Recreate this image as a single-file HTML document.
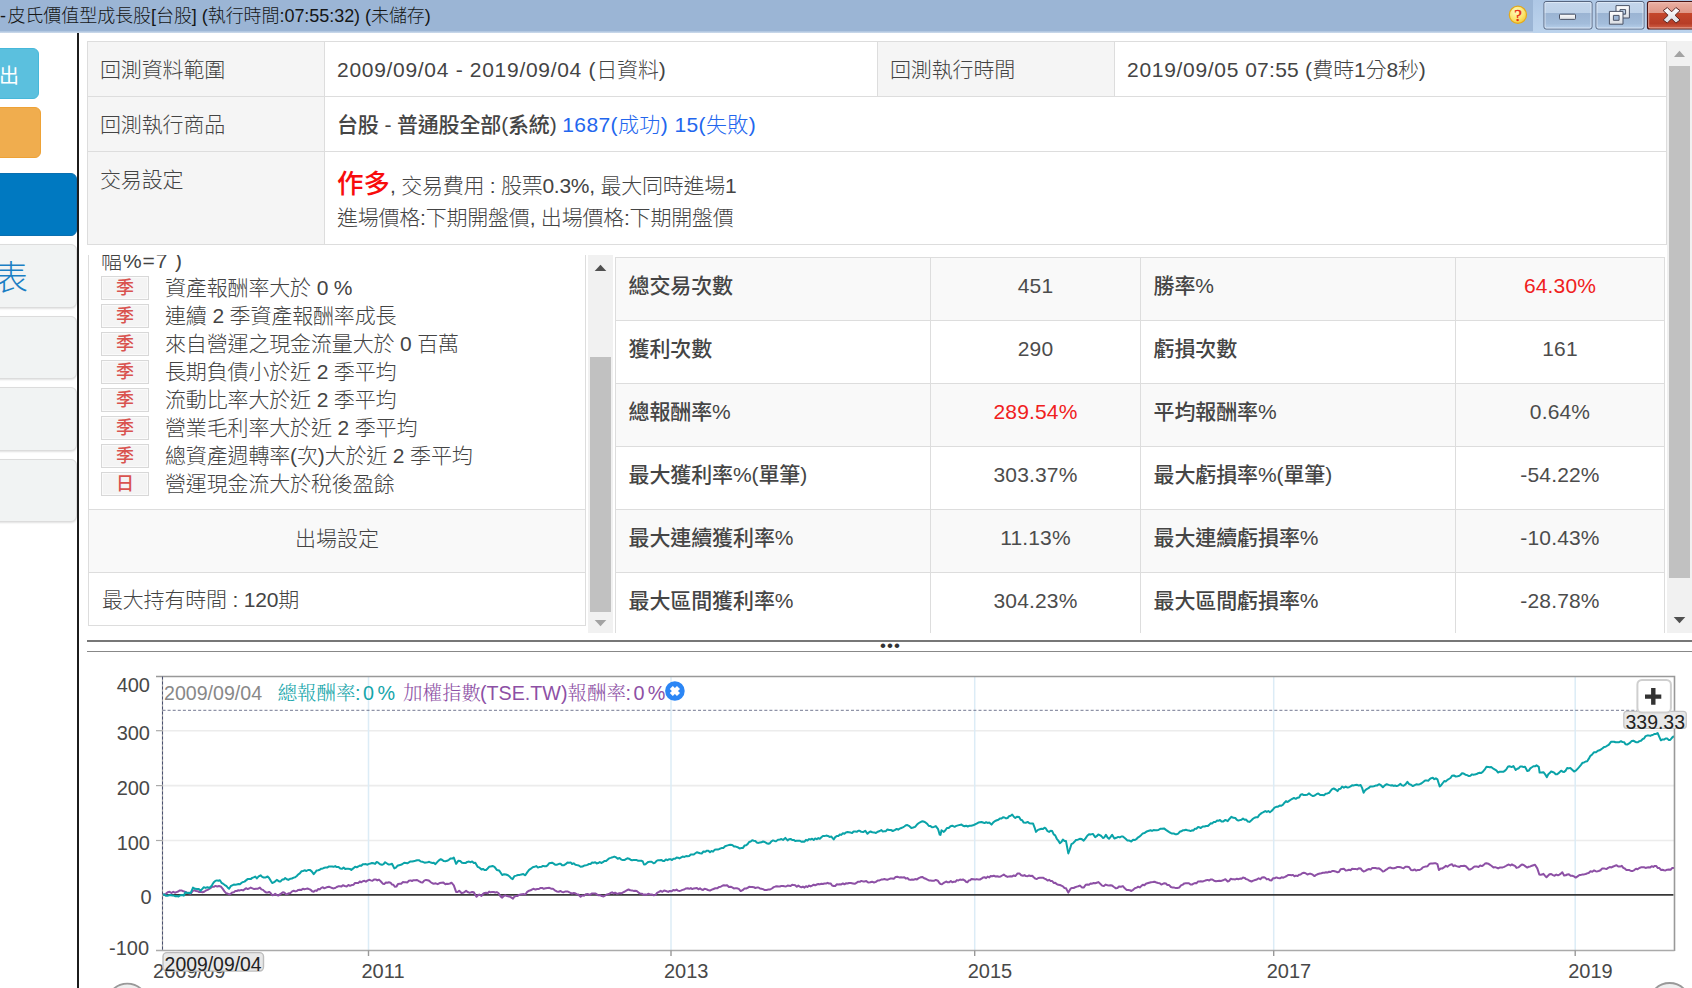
<!DOCTYPE html>
<html lang="zh-Hant">
<head>
<meta charset="utf-8">
<title>回測報告</title>
<style>
html,body{margin:0;padding:0;overflow:hidden;}
body{width:1692px;height:988px;overflow:hidden;position:relative;background:#fff;
  font-family:"Liberation Sans","Noto Sans CJK TC",sans-serif;color:#333;}
.abs{position:absolute;}
/* title bar */
#titlebar{left:0;top:0;width:1692px;height:32px;background:#9bb5d5;}
#title{left:0;top:0;height:32px;line-height:32px;font-size:18px;color:#151515;white-space:nowrap;font-weight:300;letter-spacing:-.05px;}
/* sidebar */
#vline{left:77px;top:33px;width:2px;height:955px;background:#1c1c1c;}
.sbtn{left:-10px;border-radius:6px;box-sizing:border-box;}
.stab{left:-10px;width:87px;box-sizing:border-box;background:#f1f3f3;border:1px solid #dcdcdc;border-radius:6px;box-shadow:0 1px 2px rgba(0,0,0,.12);}
/* info table */
.cell{box-sizing:border-box;border:1px solid #ddd;font-size:21px;font-weight:300;color:#444;white-space:nowrap;letter-spacing:-.15px;}
.lab{background:#f5f5f5;}
.n{letter-spacing:.7px;}
/* stats */
.srow{left:615px;width:1050px;height:63px;box-sizing:border-box;border-top:1px solid #ddd;}
.srow.odd{background:#f9f9f9;}
.sc{position:absolute;top:0;height:62px;line-height:55px;font-size:21px;letter-spacing:-.1px;box-sizing:border-box;border-left:1px solid #ddd;white-space:nowrap;color:#333;}
.sl{color:#454545;font-weight:500;padding-left:12.5px;text-align:left;}
.sv{font-weight:300;text-align:center;letter-spacing:.15px;color:#4c4c4c;}
.red{color:#f02020;}
/* list */
.li{left:101px;height:24px;white-space:nowrap;}
.tag{position:absolute;left:0;top:-.5px;width:48px;height:24px;box-sizing:border-box;border:1px solid #d8d8d8;background:#f4f4f4;
  box-shadow:inset 0 0 0 1px #fafafa;color:#d9534f;font-size:18px;line-height:22px;text-align:center;font-weight:500;}
.lt{position:absolute;left:64px;top:0;font-size:21px;line-height:24px;font-weight:300;color:#444;letter-spacing:-.15px;word-spacing:0px;}
</style>
</head>
<body>
<!-- TITLE BAR -->
<div id="titlebar" class="abs"></div>
<div id="title" class="abs"><span style="letter-spacing:1.4px">-</span>皮氏價值型成長股[台股] (執行時間:07:55:32) (未儲存)</div>


<div class="abs" style="left:0;top:31px;width:1692px;height:2px;background:linear-gradient(#a9c1de,#cfdcec);"></div>
<div class="abs" style="left:1533px;top:0;width:159px;height:33px;background:linear-gradient(#aec7e5,#bdd4ed);"></div>
<svg class="abs" style="left:1500px;top:0;" width="192" height="34" viewBox="1500 0 192 34">
<defs>
<linearGradient id="gb" x1="0" y1="0" x2="0" y2="1"><stop offset="0" stop-color="#c4d6eb"/><stop offset=".42" stop-color="#bdd1e8"/><stop offset=".43" stop-color="#9bb4d3"/><stop offset=".8" stop-color="#a2bcda"/><stop offset="1" stop-color="#b9d1ec"/></linearGradient>
<linearGradient id="gr" x1="0" y1="0" x2="0" y2="1"><stop offset="0" stop-color="#eab0a3"/><stop offset=".42" stop-color="#df9686"/><stop offset=".43" stop-color="#c4462b"/><stop offset=".8" stop-color="#b73d27"/><stop offset="1" stop-color="#d4654a"/></linearGradient>
<radialGradient id="gy" cx=".4" cy=".3" r=".8"><stop offset="0" stop-color="#fffbc0"/><stop offset=".6" stop-color="#fbe36a"/><stop offset="1" stop-color="#f3bf2a"/></radialGradient>
<linearGradient id="gw" x1="0" y1="0" x2="0" y2="1"><stop offset="0" stop-color="#ffffff"/><stop offset="1" stop-color="#d9dde3"/></linearGradient>
</defs>
<circle cx="1517.9" cy="14.8" r="8.6" fill="url(#gy)" stroke="#e3a81c" stroke-width="1.2"/>
<text x="1517.9" y="20.6" text-anchor="middle" font-family="'Liberation Serif',serif" font-weight="normal" font-size="17" fill="#e62a12" stroke="#e62a12" stroke-width=".35">?</text>
<rect x="1544" y="1.5" width="48" height="27.5" rx="2" fill="url(#gb)" stroke="#56657f" stroke-width="1"/>
<rect x="1545" y="2.5" width="46" height="25.5" rx="1.4" fill="none" stroke="#e4eefa" stroke-opacity=".75" stroke-width="1"/>
<rect x="1596" y="1.5" width="48" height="27.5" rx="2" fill="url(#gb)" stroke="#56657f" stroke-width="1"/>
<rect x="1597" y="2.5" width="46" height="25.5" rx="1.4" fill="none" stroke="#e4eefa" stroke-opacity=".75" stroke-width="1"/>
<rect x="1647.5" y="1.5" width="50" height="27.5" rx="2" fill="url(#gr)" stroke="#4a1313" stroke-width="1.2"/>
<rect x="1648.7" y="2.7" width="48" height="25.2" rx="1.4" fill="none" stroke="#f3c8bf" stroke-opacity=".7" stroke-width="1"/>
<!-- minimise glyph -->
<rect x="1559.5" y="14.2" width="16" height="5.2" rx=".8" fill="url(#gw)" stroke="#4b5366" stroke-width="1"/>
<!-- restore glyph -->
<path fill-rule="evenodd" d="M1616 5.6 h13.4 v12.4 h-13.4 z M1620 9.6 v4.6 h5.6 v-4.6 z" fill="url(#gw)" stroke="#4b5366" stroke-width="1"/>
<rect x="1609.4" y="11.4" width="13.6" height="12.8" fill="#9db6d5"/>
<path fill-rule="evenodd" d="M1609.4 11.4 h13.6 v12.8 h-13.6 z M1613.4 15.4 v4.9 h5.7 v-4.9 z" fill="url(#gw)" stroke="#4b5366" stroke-width="1"/>
<!-- close glyph -->
<path d="M1663.2 10.6 l4.1 -3.1 l4.3 4.3 l4.3 -4.3 l4.1 3.1 l-4.9 4.7 l4.9 4.7 l-4.1 3.1 l-4.3 -4.3 l-4.3 4.3 l-4.1 -3.1 l4.9 -4.7 z" fill="url(#gw)" stroke="#5b2320" stroke-width="1" stroke-linejoin="round"/>
</svg>

<!-- SIDEBAR -->

<div class="abs sbtn" style="top:48px;width:49px;height:51px;background:#5bc0de;border:1px solid #46b8da;"></div>
<div class="abs" style="left:-1px;top:64px;font-size:20px;line-height:24px;color:#fff;font-weight:400;">出</div>
<div class="abs sbtn" style="top:107px;width:51px;height:51px;background:#f0ad4e;border:1px solid #eea236;"></div>
<div class="abs sbtn" style="top:173px;width:87px;height:63px;background:#0079c1;border:1px solid #0a6fb0;border-radius:6px;"></div>
<div class="abs stab" style="top:244px;height:64px;"></div>
<div class="abs" style="left:-6px;top:256px;font-size:34px;line-height:44px;color:#1b7fc4;font-weight:300;">表</div>
<div class="abs stab" style="top:316px;height:63px;"></div>
<div class="abs stab" style="top:387px;height:64px;"></div>
<div class="abs stab" style="top:459px;height:63px;"></div>
<div id="vline" class="abs"></div>

<!-- INFO TABLE -->
<div class="abs cell lab" style="left:87px;top:41px;width:238px;height:56px;"><span class="abs" style="left:12px;top:14px;line-height:28px;">回測資料範圍</span></div>
<div class="abs cell" style="left:324px;top:41px;width:554px;height:56px;"><span class="abs" style="left:12px;top:14px;line-height:28px;"><span class="n">2009/09/04 - 2019/09/04 (</span>日資料)</span></div>
<div class="abs cell lab" style="left:877px;top:41px;width:238px;height:56px;"><span class="abs" style="left:12px;top:14px;line-height:28px;">回測執行時間</span></div>
<div class="abs cell" style="left:1114px;top:41px;width:553px;height:56px;"><span class="abs" style="left:12px;top:14px;line-height:28px;"><span class="n">2019/09/05</span><span style="letter-spacing:.25px"> 07:55 (</span>費時1分8秒)</span></div>
<div class="abs cell lab" style="left:87px;top:96px;width:238px;height:56px;"><span class="abs" style="left:12px;top:14px;line-height:28px;">回測執行商品</span></div>
<div class="abs cell" style="left:324px;top:96px;width:1343px;height:56px;"><span class="abs" style="left:12px;top:14px;line-height:28px;"><b style="font-weight:500;color:#454545;">台股 - 普通股全部(系統)</b> <span style="color:#2266ee;letter-spacing:.4px;">1687(成功) 15(失敗)</span></span></div>
<div class="abs cell lab" style="left:87px;top:151px;width:238px;height:94px;"><span class="abs" style="left:12px;top:14px;line-height:28px;">交易設定</span></div>
<div class="abs cell" style="left:324px;top:151px;width:1343px;height:94px;"><span class="abs" style="left:12px;top:14px;line-height:36px;"><b style="color:#f80c0c;font-size:26.5px;font-weight:500;letter-spacing:0;">作多</b><span style="letter-spacing:-.25px">, 交易費用 : 股票0.3%, 最大同時進場1</span></span><span class="abs" style="left:12px;top:52px;line-height:28px;letter-spacing:-.22px;">進場價格:下期開盤價, 出場價格:下期開盤價</span></div>


<!-- LIST PANEL -->
<div class="abs" id="listclip" style="left:87px;top:255px;width:500px;height:379px;overflow:hidden;">
<div class="abs" style="left:1px;top:-60px;width:498px;height:431px;box-sizing:border-box;border:1px solid #ddd;"></div>
<div class="abs lt" style="left:14px;top:-6px;letter-spacing:.9px;">幅%=7 )</div>
<div class="abs li" style="left:14px;top:21px;"><span class="tag">季</span><span class="lt">資產報酬率大於 0 %</span></div>
<div class="abs li" style="left:14px;top:49px;"><span class="tag">季</span><span class="lt">連續 2 季資產報酬率成長</span></div>
<div class="abs li" style="left:14px;top:77px;"><span class="tag">季</span><span class="lt">來自營運之現金流量大於 0 百萬</span></div>
<div class="abs li" style="left:14px;top:105px;"><span class="tag">季</span><span class="lt">長期負債小於近 2 季平均</span></div>
<div class="abs li" style="left:14px;top:133px;"><span class="tag">季</span><span class="lt">流動比率大於近 2 季平均</span></div>
<div class="abs li" style="left:14px;top:161px;"><span class="tag">季</span><span class="lt">營業毛利率大於近 2 季平均</span></div>
<div class="abs li" style="left:14px;top:189px;"><span class="tag">季</span><span class="lt">總資產週轉率(次)大於近 2 季平均</span></div>
<div class="abs li" style="left:14px;top:217px;"><span class="tag">日</span><span class="lt">營運現金流大於稅後盈餘</span></div>
<div class="abs" style="left:1px;top:254px;width:498px;height:64px;box-sizing:border-box;border:1px solid #ddd;background:#f9f9f9;text-align:center;font-size:21px;font-weight:300;line-height:58px;color:#444;">出場設定</div>
<div class="abs" style="left:15px;top:331px;font-size:21px;font-weight:300;line-height:28px;color:#444;white-space:nowrap;letter-spacing:-.2px;">最大持有時間 : 120期</div>
</div>
<!-- list scrollbar -->
<div class="abs" style="left:588px;top:255px;width:25px;height:378px;background:#f1f1f1;"></div>
<div class="abs" style="left:590px;top:357px;width:21px;height:255px;background:#c1c1c1;"></div>
<svg class="abs" style="left:588px;top:255px;" width="25" height="378"><path d="M6.7 16 L12.5 9.7 L18.3 16 Z" fill="#505050"/><path d="M6.7 365 L12.5 371.3 L18.3 365 Z" fill="#a3a3a3"/></svg>

<!-- STATS TABLE -->
<div class="abs" id="statclip" style="left:0;top:257px;width:1667px;height:376px;overflow:hidden;">
<div class="abs srow odd" style="top:0px;"><div class="sc sl" style="left:0;width:315px;">總交易次數</div><div class="sc sv " style="left:315px;width:210px;">451</div><div class="sc sl" style="left:525px;width:315px;">勝率%</div><div class="sc sv red" style="left:840px;width:210px;border-right:1px solid #ddd;">64.30%</div></div>
<div class="abs srow " style="top:63px;"><div class="sc sl" style="left:0;width:315px;">獲利次數</div><div class="sc sv " style="left:315px;width:210px;">290</div><div class="sc sl" style="left:525px;width:315px;">虧損次數</div><div class="sc sv " style="left:840px;width:210px;border-right:1px solid #ddd;">161</div></div>
<div class="abs srow odd" style="top:126px;"><div class="sc sl" style="left:0;width:315px;">總報酬率%</div><div class="sc sv red" style="left:315px;width:210px;">289.54%</div><div class="sc sl" style="left:525px;width:315px;">平均報酬率%</div><div class="sc sv " style="left:840px;width:210px;border-right:1px solid #ddd;">0.64%</div></div>
<div class="abs srow " style="top:189px;"><div class="sc sl" style="left:0;width:315px;">最大獲利率%(單筆)</div><div class="sc sv " style="left:315px;width:210px;">303.37%</div><div class="sc sl" style="left:525px;width:315px;">最大虧損率%(單筆)</div><div class="sc sv " style="left:840px;width:210px;border-right:1px solid #ddd;">-54.22%</div></div>
<div class="abs srow odd" style="top:252px;"><div class="sc sl" style="left:0;width:315px;">最大連續獲利率%</div><div class="sc sv " style="left:315px;width:210px;">11.13%</div><div class="sc sl" style="left:525px;width:315px;">最大連續虧損率%</div><div class="sc sv " style="left:840px;width:210px;border-right:1px solid #ddd;">-10.43%</div></div>
<div class="abs srow " style="top:315px;"><div class="sc sl" style="left:0;width:315px;">最大區間獲利率%</div><div class="sc sv " style="left:315px;width:210px;">304.23%</div><div class="sc sl" style="left:525px;width:315px;">最大區間虧損率%</div><div class="sc sv " style="left:840px;width:210px;border-right:1px solid #ddd;">-28.78%</div></div>
</div>
<!-- main scrollbar -->
<div class="abs" style="left:1667px;top:41px;width:25px;height:592px;background:#f1f1f1;"></div>
<div class="abs" style="left:1669px;top:66px;width:21px;height:512px;background:#c1c1c1;"></div>
<svg class="abs" style="left:1667px;top:41px;" width="25" height="592"><path d="M7 16 L12.5 9.7 L18 16 Z" fill="#a3a3a3"/><path d="M6.7 576 L12.5 582.3 L18.3 576 Z" fill="#505050"/></svg>


<!-- SPLITTER -->
<div class="abs" style="left:87px;top:640px;width:1605px;height:2px;background:#777;"></div>
<div class="abs" style="left:87px;top:651px;width:1605px;height:1px;background:#888;"></div>
<div class="abs" style="left:879.9px;top:636.4px;font-size:17px;line-height:20px;letter-spacing:1.07px;color:#333;font-family:'Liberation Sans',sans-serif;">•••</div>


<!-- CHART -->
<svg class="abs" id="chart" style="left:0;top:655px;" width="1692" height="333" viewBox="0 655 1692 333" font-family="'Liberation Sans',sans-serif">
<line x1="162.5" x2="1674.5" y1="730.7" y2="730.7" stroke="#ececec" stroke-width="1.6"/>
<line x1="162.5" x2="1674.5" y1="785.6" y2="785.6" stroke="#ececec" stroke-width="1.6"/>
<line x1="162.5" x2="1674.5" y1="840.5" y2="840.5" stroke="#ececec" stroke-width="1.6"/>
<line x1="368.5" x2="368.5" y1="676.5" y2="950.5" stroke="#dcecf6" stroke-width="1.5"/>
<line x1="671.0" x2="671.0" y1="676.5" y2="950.5" stroke="#dcecf6" stroke-width="1.5"/>
<line x1="974.7" x2="974.7" y1="676.5" y2="950.5" stroke="#dcecf6" stroke-width="1.5"/>
<line x1="1273.7" x2="1273.7" y1="676.5" y2="950.5" stroke="#dcecf6" stroke-width="1.5"/>
<line x1="1575.2" x2="1575.2" y1="676.5" y2="950.5" stroke="#dcecf6" stroke-width="1.5"/>
<line x1="162.5" x2="1673.5" y1="894.9" y2="894.9" stroke="#383838" stroke-width="1.7"/>
<path d="M162.3 894.5 L164.1 894.6 L165.9 893.8 L167.7 892.2 L169.6 891.8 L171.5 893.0 L173.2 891.8 L174.9 892.7 L176.5 892.1 L178.2 891.5 L179.8 890.4 L181.5 890.4 L183.4 891.3 L185.4 891.9 L187.1 892.7 L188.9 893.3 L190.7 893.7 L193.0 890.7 L194.6 890.3 L196.1 891.0 L197.6 891.2 L199.2 892.0 L200.7 891.9 L202.4 892.3 L204.2 891.7 L205.9 890.5 L207.6 889.9 L209.2 889.0 L210.7 887.9 L212.2 886.7 L213.8 886.8 L215.5 885.9 L217.2 886.5 L219.0 886.1 L220.7 886.4 L222.6 888.7 L224.5 891.4 L226.1 893.2 L227.6 893.5 L229.1 894.5 L230.7 893.8 L232.2 892.5 L233.8 892.2 L235.3 890.9 L236.8 891.0 L238.4 890.2 L239.9 890.4 L241.4 889.9 L243.0 890.4 L244.5 889.4 L246.0 888.2 L247.6 889.1 L249.1 888.5 L250.7 887.6 L252.5 888.4 L254.2 889.1 L256.0 888.8 L258.0 888.7 L259.9 887.6 L261.4 889.4 L263.0 889.9 L264.5 891.4 L266.0 892.4 L267.6 892.6 L269.1 891.9 L270.6 893.0 L272.2 895.3 L273.7 895.0 L275.2 893.7 L276.8 895.0 L278.3 895.6 L279.9 894.4 L281.4 893.4 L282.9 892.2 L284.5 892.8 L286.0 894.2 L287.5 894.0 L289.1 893.2 L290.6 892.9 L292.1 891.4 L293.7 890.8 L295.2 891.4 L296.8 891.0 L298.3 889.9 L299.8 889.7 L301.4 889.9 L302.9 888.8 L304.4 889.3 L306.0 888.9 L307.5 888.5 L309.0 889.1 L310.6 889.7 L312.1 891.2 L313.7 891.7 L315.2 890.4 L316.7 890.9 L318.3 889.0 L319.8 889.4 L321.3 887.9 L322.9 887.3 L324.4 888.3 L325.9 887.6 L327.5 887.0 L329.0 886.8 L330.6 887.4 L332.1 888.1 L333.6 888.4 L335.2 888.0 L336.7 887.0 L338.2 886.3 L339.8 886.3 L341.3 886.6 L342.9 885.3 L344.8 886.0 L346.7 886.4 L348.4 885.0 L350.0 885.8 L351.7 885.1 L353.4 884.8 L355.0 883.0 L356.7 883.0 L358.2 883.1 L359.8 881.5 L361.3 882.3 L362.8 881.2 L364.4 880.8 L365.9 881.7 L367.4 880.7 L369.1 879.8 L370.7 880.4 L372.4 880.8 L374.0 879.6 L375.7 879.4 L377.3 880.4 L379.0 879.6 L380.9 881.5 L382.8 883.7 L384.3 883.9 L385.9 882.5 L387.4 882.8 L388.9 882.3 L390.5 882.7 L391.9 884.4 L393.4 884.7 L394.8 886.8 L396.4 886.6 L398.1 883.9 L399.7 883.7 L401.2 883.8 L402.8 882.1 L404.3 882.2 L405.9 882.2 L407.4 882.4 L408.9 880.8 L410.5 880.4 L412.0 881.0 L413.5 880.2 L415.3 880.3 L417.1 880.0 L418.9 881.1 L420.8 882.2 L422.5 882.6 L424.2 880.6 L426.0 879.9 L427.7 880.2 L429.2 880.8 L430.8 882.2 L432.3 883.3 L433.8 883.7 L435.7 883.3 L437.7 884.2 L439.6 883.1 L441.5 882.7 L443.4 882.6 L445.4 884.2 L446.9 883.7 L448.4 883.9 L450.0 883.5 L451.5 882.7 L453.8 885.3 L456.1 891.9 L457.6 892.0 L459.2 890.7 L461.5 893.0 L463.0 892.7 L464.6 892.1 L466.1 890.7 L467.6 892.0 L469.2 892.7 L470.7 892.5 L472.2 891.9 L473.8 892.2 L475.2 894.8 L476.5 896.8 L477.9 895.3 L479.2 894.5 L481.5 896.0 L483.0 893.8 L484.5 893.0 L486.1 892.7 L487.6 893.2 L489.1 891.6 L490.7 892.3 L492.2 891.9 L493.8 892.0 L495.3 892.5 L496.8 892.1 L498.4 893.0 L500.3 896.1 L502.2 897.6 L503.7 896.0 L505.3 895.3 L507.1 896.1 L508.9 896.4 L510.7 897.1 L513.0 898.6 L514.5 896.5 L516.0 896.0 L517.6 895.9 L519.1 894.9 L520.6 894.5 L522.2 894.2 L523.7 894.1 L525.3 894.5 L527.2 891.9 L529.1 890.7 L530.6 890.3 L532.2 889.4 L533.7 888.8 L535.4 889.5 L537.2 889.1 L538.9 889.0 L540.6 887.9 L542.2 887.9 L543.7 888.8 L545.6 888.3 L547.5 887.9 L549.3 887.8 L551.1 888.7 L552.9 888.8 L554.8 890.3 L556.8 891.4 L558.7 891.7 L560.6 891.0 L562.1 892.0 L563.7 892.2 L565.6 891.4 L567.5 891.4 L569.0 892.1 L570.6 893.0 L572.1 893.7 L573.7 893.0 L575.2 893.3 L576.7 894.1 L578.3 894.5 L580.6 896.8 L582.3 895.4 L584.0 895.8 L585.8 894.3 L587.5 894.0 L589.8 895.0 L591.7 893.5 L593.6 893.4 L595.2 893.5 L596.7 894.2 L598.2 895.3 L600.0 895.2 L601.8 896.1 L603.6 896.5 L605.3 895.5 L607.1 894.4 L608.8 894.1 L610.5 893.0 L612.1 892.3 L613.6 893.5 L615.1 892.7 L616.7 893.7 L618.2 893.5 L619.8 893.1 L621.3 893.4 L623.1 892.4 L624.9 891.5 L626.7 890.4 L628.5 889.5 L630.3 890.2 L632.0 890.4 L633.6 890.9 L635.1 890.7 L636.7 891.0 L638.2 892.2 L640.0 893.6 L641.8 893.7 L643.6 894.8 L645.1 894.5 L646.6 894.8 L648.2 893.7 L650.0 894.4 L651.8 894.4 L653.6 895.3 L655.4 895.0 L657.1 892.8 L658.9 891.9 L660.7 890.8 L662.4 891.8 L664.1 890.5 L665.9 891.0 L668.2 891.9 L669.9 890.9 L671.7 891.2 L673.5 889.9 L675.0 890.5 L676.5 889.6 L677.9 890.6 L679.4 891.0 L680.8 890.6 L682.5 889.9 L684.2 889.5 L686.0 888.4 L687.7 888.3 L689.2 888.8 L690.8 888.1 L692.3 889.1 L693.8 888.4 L695.4 888.2 L696.9 888.0 L698.4 889.3 L700.0 888.3 L701.5 889.6 L703.0 889.9 L704.6 888.7 L706.1 889.1 L708.0 890.0 L710.0 890.6 L711.8 889.7 L713.5 889.0 L715.3 888.3 L717.1 888.3 L718.9 887.1 L720.7 886.8 L722.3 885.7 L723.8 885.3 L725.3 885.6 L727.1 885.2 L728.9 887.0 L730.7 886.8 L732.2 887.4 L733.8 888.4 L735.3 888.3 L736.9 888.3 L738.8 888.9 L740.7 891.1 L742.6 890.2 L744.5 888.6 L746.1 888.5 L747.6 887.8 L749.1 886.8 L750.7 887.0 L752.2 886.9 L753.8 887.2 L755.3 888.0 L756.8 887.6 L758.4 887.5 L759.9 888.4 L761.4 888.7 L763.0 889.1 L764.8 890.1 L766.6 890.0 L768.4 889.6 L770.1 889.5 L771.9 888.5 L773.7 887.1 L775.3 886.6 L776.8 886.3 L778.3 886.6 L779.9 886.5 L781.4 885.9 L783.0 886.0 L784.5 886.3 L786.0 886.5 L787.6 885.6 L789.1 885.7 L790.6 886.0 L792.2 884.7 L793.7 885.1 L795.2 885.3 L796.8 886.7 L798.3 885.6 L799.9 886.6 L801.4 887.3 L802.9 886.6 L804.5 887.6 L806.0 886.2 L807.5 887.0 L809.1 885.6 L810.6 886.4 L812.1 885.7 L813.7 884.7 L815.2 885.3 L816.8 884.5 L818.3 884.0 L819.8 884.4 L821.4 883.7 L822.9 884.0 L824.4 883.5 L826.0 883.6 L827.5 882.8 L829.0 883.5 L830.6 883.4 L832.1 885.5 L833.7 886.0 L835.2 886.0 L836.7 884.3 L838.3 884.5 L839.8 884.3 L841.3 884.4 L842.9 883.4 L844.4 884.3 L845.9 883.3 L847.5 883.5 L849.0 883.0 L850.9 883.0 L852.9 883.4 L854.7 883.8 L856.4 882.8 L858.2 881.7 L859.8 881.8 L861.3 880.9 L862.9 881.4 L864.4 881.4 L866.3 881.1 L868.2 882.5 L870.2 882.3 L872.1 881.7 L874.0 882.5 L875.9 881.9 L877.7 880.5 L879.5 880.4 L881.3 879.6 L882.8 879.4 L884.4 879.1 L885.9 879.4 L887.4 879.7 L889.0 879.1 L890.5 878.5 L892.0 878.4 L893.8 878.7 L895.6 877.0 L897.4 876.8 L899.2 877.4 L900.9 877.3 L902.6 877.6 L904.3 877.3 L905.9 878.6 L907.4 878.1 L908.9 879.5 L910.5 879.9 L912.0 879.5 L913.6 879.7 L915.1 879.1 L916.9 879.4 L918.7 878.1 L920.5 877.3 L922.3 876.9 L924.1 878.2 L925.9 878.8 L927.4 879.7 L928.9 880.4 L930.5 880.5 L932.0 880.7 L933.9 880.8 L935.8 879.9 L937.8 880.7 L939.7 883.3 L940.5 884.1 L941.9 884.3 L943.3 883.2 L944.7 882.3 L946.1 881.5 L947.7 882.3 L949.2 882.3 L950.8 881.0 L952.3 882.3 L953.8 881.8 L955.4 881.7 L956.9 880.1 L958.4 880.5 L960.0 879.5 L961.5 879.9 L963.0 879.5 L964.6 880.3 L966.0 881.8 L967.4 882.3 L968.7 880.5 L970.1 880.3 L971.5 879.0 L973.4 879.2 L975.3 879.5 L976.9 879.1 L978.4 879.6 L980.0 879.5 L981.5 878.7 L983.0 877.4 L984.6 877.2 L986.1 878.1 L987.6 876.6 L989.2 877.5 L990.7 876.0 L992.2 876.2 L993.8 875.7 L995.5 876.5 L997.2 876.3 L999.0 876.7 L1000.7 876.4 L1002.2 875.5 L1003.8 874.6 L1005.7 876.0 L1007.6 876.9 L1009.1 876.4 L1010.7 876.2 L1012.2 876.4 L1013.8 875.4 L1015.3 876.1 L1017.6 873.4 L1019.4 873.4 L1021.2 875.3 L1023.0 875.7 L1024.5 875.1 L1026.0 876.1 L1027.6 876.2 L1029.1 875.5 L1030.7 876.0 L1032.2 875.7 L1033.7 877.3 L1035.3 878.6 L1036.8 879.0 L1038.3 878.0 L1039.9 877.7 L1041.4 877.8 L1043.0 877.7 L1044.5 878.6 L1046.0 879.2 L1047.6 880.6 L1049.1 879.8 L1050.6 881.0 L1052.2 881.0 L1053.7 882.9 L1055.2 882.8 L1056.8 884.1 L1058.3 884.8 L1059.9 885.0 L1061.4 885.7 L1062.9 886.4 L1064.5 888.0 L1066.0 888.3 L1068.3 892.6 L1070.6 888.7 L1072.1 887.9 L1073.7 888.0 L1075.2 887.2 L1076.8 886.6 L1078.3 886.2 L1079.8 885.6 L1082.1 887.6 L1083.9 887.4 L1085.7 884.8 L1087.5 884.6 L1089.0 884.8 L1090.6 883.4 L1092.1 883.7 L1093.7 883.0 L1095.2 883.3 L1096.7 882.7 L1098.3 882.1 L1100.2 883.7 L1102.1 885.6 L1103.9 886.1 L1105.7 884.6 L1107.5 885.2 L1109.0 885.6 L1110.6 885.3 L1112.1 885.6 L1114.0 887.0 L1115.9 888.3 L1117.5 888.0 L1119.0 886.4 L1120.9 886.8 L1122.9 886.1 L1124.8 888.3 L1126.7 889.9 L1128.2 890.0 L1129.8 890.2 L1131.3 891.0 L1133.1 889.8 L1134.9 888.3 L1136.7 887.6 L1138.2 886.7 L1139.8 887.4 L1141.3 886.1 L1142.8 884.7 L1144.4 885.3 L1145.9 883.8 L1147.4 883.3 L1149.2 882.7 L1151.0 882.2 L1152.8 882.1 L1154.6 881.7 L1156.4 882.6 L1158.2 883.0 L1159.7 883.2 L1161.3 884.6 L1162.8 883.9 L1164.3 883.3 L1165.9 883.5 L1167.4 885.1 L1168.9 884.9 L1170.9 887.0 L1172.8 887.6 L1174.3 887.6 L1175.9 888.1 L1177.4 888.0 L1179.2 887.6 L1181.0 885.4 L1182.8 884.6 L1184.3 883.4 L1185.9 883.3 L1187.4 883.3 L1188.9 883.2 L1190.5 884.5 L1192.0 884.6 L1193.5 883.7 L1194.9 883.1 L1196.4 883.3 L1197.9 881.6 L1199.4 881.5 L1200.8 881.3 L1202.6 881.5 L1204.4 880.9 L1206.1 880.3 L1207.7 879.9 L1209.2 880.5 L1210.8 879.4 L1212.3 879.5 L1214.1 880.7 L1215.9 881.3 L1217.7 881.0 L1219.5 880.8 L1221.3 880.9 L1223.0 880.3 L1225.4 879.2 L1227.7 881.5 L1229.2 880.9 L1230.7 878.7 L1232.3 879.2 L1233.8 879.2 L1235.3 879.4 L1236.9 878.7 L1238.4 879.2 L1240.0 878.6 L1241.5 878.8 L1243.0 877.6 L1244.6 877.9 L1246.1 879.1 L1247.6 879.5 L1249.6 880.8 L1251.5 881.5 L1253.3 880.6 L1255.1 880.0 L1256.9 879.5 L1258.6 878.3 L1260.3 879.2 L1262.0 877.5 L1263.8 877.2 L1265.3 877.9 L1266.8 879.4 L1268.4 878.9 L1269.9 880.3 L1271.5 880.4 L1273.0 878.3 L1274.5 878.3 L1276.3 877.4 L1278.1 878.0 L1279.9 878.3 L1281.6 877.3 L1283.3 877.7 L1285.0 876.9 L1286.7 876.0 L1288.4 874.9 L1289.9 874.9 L1291.4 875.3 L1293.0 874.9 L1294.5 876.2 L1296.0 875.6 L1297.6 876.0 L1299.1 874.7 L1300.6 874.5 L1302.2 873.3 L1303.9 872.8 L1305.6 873.2 L1307.4 874.5 L1309.1 873.8 L1310.9 873.8 L1312.7 874.7 L1314.5 876.1 L1316.3 874.8 L1318.1 874.0 L1319.9 873.6 L1321.4 873.3 L1322.9 872.8 L1324.5 872.7 L1326.0 872.3 L1327.5 872.6 L1329.1 871.7 L1330.6 872.0 L1332.1 871.1 L1333.7 871.0 L1335.6 871.4 L1337.5 872.3 L1339.1 871.7 L1340.6 869.3 L1342.1 869.0 L1343.9 868.8 L1345.7 870.5 L1347.5 870.3 L1349.0 869.8 L1350.6 870.2 L1352.1 868.7 L1353.7 869.0 L1355.4 868.9 L1357.1 869.4 L1358.8 868.3 L1360.6 868.4 L1362.1 870.4 L1363.6 871.5 L1365.4 870.9 L1367.2 869.7 L1369.0 869.0 L1370.6 869.6 L1372.1 868.1 L1373.6 868.0 L1375.4 868.0 L1377.2 868.4 L1379.0 868.3 L1380.9 869.6 L1382.9 871.5 L1384.4 871.1 L1385.9 869.8 L1387.5 868.8 L1389.0 867.7 L1390.7 867.6 L1392.3 868.3 L1394.0 868.2 L1395.7 867.8 L1397.3 866.9 L1399.0 866.9 L1400.5 867.2 L1402.1 867.9 L1403.6 868.3 L1405.5 866.7 L1407.4 866.7 L1409.2 867.2 L1411.0 870.0 L1412.8 870.3 L1414.5 869.4 L1416.2 870.6 L1417.9 869.9 L1419.6 870.0 L1421.3 869.0 L1422.8 867.4 L1424.3 866.9 L1425.9 866.4 L1427.6 866.2 L1429.3 864.0 L1431.1 863.4 L1432.8 863.4 L1434.3 863.3 L1435.9 863.3 L1437.4 864.1 L1438.9 870.0 L1440.7 868.4 L1442.5 868.4 L1444.3 867.2 L1445.9 865.8 L1447.4 866.7 L1448.9 865.5 L1450.5 864.6 L1451.9 864.2 L1453.4 866.1 L1454.9 865.3 L1456.4 866.1 L1457.9 866.6 L1459.4 866.9 L1461.0 865.9 L1462.6 866.1 L1464.3 865.8 L1465.8 866.2 L1467.3 867.7 L1468.9 869.5 L1470.4 869.4 L1472.0 868.5 L1473.5 867.2 L1475.0 866.4 L1476.8 866.6 L1478.5 866.9 L1480.2 865.5 L1481.9 866.1 L1483.5 865.1 L1485.0 863.6 L1486.5 863.3 L1488.3 863.7 L1490.0 864.8 L1491.7 866.0 L1493.5 867.6 L1495.0 867.1 L1496.5 867.6 L1498.1 868.4 L1499.6 867.6 L1501.1 867.5 L1502.7 867.4 L1504.2 866.9 L1505.8 866.0 L1507.3 865.1 L1508.8 864.5 L1510.4 865.5 L1511.9 864.4 L1513.4 865.3 L1515.0 865.9 L1516.5 867.9 L1518.3 867.4 L1520.1 865.9 L1521.9 864.5 L1523.7 865.0 L1525.5 866.4 L1527.3 867.6 L1528.8 866.7 L1530.3 866.4 L1531.9 865.8 L1533.4 865.2 L1535.0 864.8 L1537.3 868.4 L1539.3 874.5 L1540.6 874.8 L1542.0 874.6 L1543.4 873.8 L1544.9 875.6 L1546.5 877.3 L1548.0 875.7 L1549.5 874.2 L1551.2 874.0 L1552.9 875.1 L1554.6 875.7 L1556.3 874.6 L1558.0 875.3 L1559.4 874.6 L1560.9 873.6 L1562.3 872.2 L1564.1 875.6 L1565.7 875.3 L1567.2 874.5 L1568.9 874.3 L1570.6 875.8 L1572.3 875.8 L1574.0 876.4 L1575.7 877.6 L1577.6 876.4 L1579.5 875.0 L1581.0 874.9 L1582.6 874.5 L1584.1 874.4 L1585.7 874.0 L1587.2 873.3 L1588.7 873.0 L1590.5 871.3 L1592.3 871.7 L1594.1 870.4 L1595.6 871.2 L1597.2 871.4 L1598.7 871.0 L1600.5 870.3 L1602.3 868.4 L1604.1 868.4 L1606.4 869.1 L1608.1 867.9 L1609.8 867.1 L1611.5 867.4 L1613.2 866.5 L1614.9 865.8 L1616.6 865.2 L1618.3 866.6 L1620.0 866.6 L1621.8 865.8 L1623.3 867.9 L1624.8 868.5 L1626.4 869.9 L1627.9 869.9 L1629.4 870.1 L1631.0 871.0 L1632.7 871.0 L1634.3 870.1 L1636.0 868.7 L1637.6 869.3 L1639.3 868.0 L1641.0 867.3 L1642.5 867.2 L1644.0 867.3 L1645.6 867.9 L1647.1 867.6 L1648.7 867.3 L1650.2 867.4 L1651.7 866.2 L1653.3 866.9 L1654.8 865.9 L1656.3 866.1 L1657.9 868.1 L1659.4 868.1 L1660.9 869.9 L1662.5 869.8 L1664.0 870.3 L1665.6 870.4 L1667.2 869.7 L1668.9 869.4 L1670.6 869.7 L1672.3 867.9 L1674.0 867.9" fill="none" stroke="#8d50a5" stroke-width="2" stroke-linejoin="round"/>
<path d="M162.3 895.0 L164.0 894.4 L165.8 895.7 L167.5 895.7 L169.2 895.3 L170.8 895.0 L172.3 895.6 L173.8 895.6 L175.4 896.2 L176.9 896.0 L178.6 896.5 L180.4 895.2 L182.1 895.0 L183.8 895.7 L185.4 892.2 L187.1 893.1 L188.9 892.7 L190.7 893.1 L193.0 887.6 L195.0 888.8 L196.9 889.1 L198.8 889.0 L200.7 890.7 L202.3 888.9 L203.8 887.3 L205.6 887.9 L207.4 887.2 L209.2 887.9 L210.7 886.8 L212.2 884.8 L213.8 882.2 L215.3 880.9 L216.9 880.4 L218.4 880.8 L219.9 880.2 L221.5 882.8 L223.0 883.7 L224.5 884.8 L226.1 885.8 L227.6 887.4 L229.1 888.8 L230.7 886.2 L232.2 885.3 L233.8 884.6 L235.3 884.7 L236.8 884.6 L238.4 883.9 L239.9 884.2 L241.4 882.9 L243.0 882.0 L244.5 881.6 L246.0 880.4 L247.6 879.1 L249.1 879.1 L250.7 879.1 L252.2 877.9 L253.7 877.4 L255.3 876.5 L256.8 878.4 L258.7 876.3 L260.6 875.3 L262.2 876.9 L263.7 877.5 L265.3 877.6 L267.6 876.5 L269.1 878.0 L270.6 880.5 L272.2 883.0 L273.7 882.3 L275.2 881.3 L276.8 879.9 L279.1 881.4 L280.6 881.4 L282.2 879.6 L283.7 879.5 L285.2 878.1 L286.8 879.3 L288.3 879.9 L290.1 878.8 L291.9 878.5 L293.7 877.6 L295.2 877.2 L296.8 876.0 L298.3 874.3 L299.8 873.4 L301.4 871.3 L302.9 871.0 L304.6 870.3 L306.4 871.0 L308.1 870.0 L309.8 869.9 L311.7 871.4 L313.7 874.1 L315.2 872.3 L316.7 870.4 L318.3 870.2 L319.8 869.7 L321.3 868.7 L322.9 868.4 L324.4 867.8 L325.9 867.4 L327.5 867.4 L329.0 866.4 L330.6 866.6 L332.1 866.5 L333.6 866.8 L335.2 866.1 L336.7 867.1 L338.5 866.9 L340.3 868.6 L342.1 868.8 L343.6 867.6 L345.2 868.9 L346.7 868.7 L348.2 868.8 L349.8 868.9 L351.3 869.9 L353.2 868.4 L355.1 866.8 L356.7 867.3 L358.2 866.5 L359.8 865.6 L361.3 865.7 L362.8 864.2 L364.4 864.2 L365.9 864.1 L367.4 864.7 L369.0 863.9 L370.5 863.5 L372.0 863.0 L373.6 863.3 L375.1 863.9 L376.7 862.0 L378.2 862.7 L380.1 864.3 L382.0 864.8 L383.6 864.1 L385.1 862.2 L387.4 863.8 L388.9 864.5 L390.5 864.2 L392.0 863.8 L394.3 868.4 L395.9 867.6 L397.4 865.8 L399.1 865.2 L400.8 864.8 L402.5 864.0 L404.2 862.8 L405.9 863.0 L407.4 863.3 L408.9 862.4 L410.5 861.4 L412.0 861.5 L413.5 861.2 L415.3 860.8 L417.1 860.3 L418.9 860.2 L420.8 861.5 L422.7 861.8 L424.6 862.7 L426.1 862.5 L427.7 862.3 L429.2 861.8 L430.8 862.6 L432.3 862.9 L433.8 862.8 L435.4 864.2 L437.2 862.1 L439.0 860.3 L440.7 859.2 L442.3 860.0 L443.8 861.1 L445.4 861.2 L447.1 860.8 L448.9 859.8 L450.7 858.4 L452.3 858.6 L453.8 857.6 L456.1 863.8 L458.4 860.7 L460.2 861.0 L462.0 862.8 L463.8 863.0 L465.5 863.1 L467.2 861.9 L469.0 861.6 L470.7 862.2 L472.2 861.5 L473.8 863.0 L475.3 862.7 L477.6 866.8 L479.5 867.7 L481.5 869.5 L483.0 868.9 L484.5 870.0 L486.1 869.9 L487.6 868.5 L489.1 866.8 L490.7 866.4 L492.6 866.0 L494.5 866.8 L496.8 869.9 L499.1 870.4 L500.7 872.7 L502.2 875.0 L504.1 874.2 L506.0 874.5 L508.0 875.3 L509.9 876.8 L511.3 878.4 L512.7 879.1 L514.5 876.1 L516.2 875.6 L518.0 875.0 L519.7 874.9 L521.4 874.5 L523.3 874.1 L525.3 875.3 L527.2 872.4 L529.1 869.9 L530.9 868.7 L532.7 867.3 L534.5 866.8 L536.2 866.1 L537.9 867.6 L539.7 866.9 L541.4 866.8 L542.9 865.9 L544.5 866.3 L546.0 866.3 L547.5 865.3 L549.1 863.3 L550.6 863.0 L552.1 862.7 L553.7 863.6 L555.2 864.8 L557.1 864.7 L559.1 863.8 L560.6 863.7 L562.1 865.2 L563.7 865.3 L565.6 864.2 L567.5 862.5 L569.0 862.8 L570.6 862.4 L572.1 864.0 L573.7 863.3 L575.4 864.7 L577.1 865.1 L578.8 865.5 L580.6 866.8 L582.4 866.6 L584.2 865.6 L585.9 865.3 L587.5 864.9 L589.0 863.9 L590.6 864.0 L592.1 862.4 L593.6 862.7 L595.2 862.3 L596.7 863.4 L598.2 863.1 L599.8 862.0 L601.3 863.0 L602.9 862.2 L604.4 860.9 L605.9 861.1 L607.5 859.8 L609.0 858.4 L610.7 857.9 L612.5 857.3 L614.2 856.6 L615.9 857.2 L617.7 858.7 L619.5 858.0 L621.3 859.6 L622.8 860.0 L624.4 860.1 L625.9 859.2 L627.4 858.3 L629.0 858.7 L630.5 859.7 L632.0 860.2 L633.6 860.1 L635.1 860.0 L636.7 860.1 L638.2 860.7 L639.7 860.7 L641.3 860.7 L642.8 861.5 L644.0 864.5 L645.5 864.2 L646.9 863.0 L648.3 861.9 L649.7 861.8 L651.6 861.8 L653.6 863.3 L655.1 862.6 L656.6 860.9 L658.2 860.2 L659.7 860.2 L661.2 859.9 L662.8 860.9 L664.3 861.0 L665.9 859.4 L667.4 860.2 L668.9 859.3 L670.5 859.2 L672.0 860.0 L673.5 858.7 L675.1 858.7 L676.6 857.6 L678.0 857.7 L679.4 858.4 L680.8 857.6 L682.6 856.6 L684.4 856.9 L686.1 856.1 L687.7 856.3 L689.2 856.1 L690.8 854.6 L692.3 854.5 L693.8 854.5 L695.4 853.3 L696.9 852.2 L698.4 852.7 L700.0 853.3 L701.7 853.5 L703.4 851.5 L705.2 851.8 L706.9 850.7 L708.4 850.7 L710.0 852.2 L711.5 851.0 L713.0 851.7 L714.6 849.8 L716.1 849.6 L717.9 849.6 L719.7 848.8 L721.5 848.1 L723.3 847.9 L725.1 846.2 L726.9 845.6 L728.7 845.1 L730.5 844.8 L732.2 845.0 L734.0 846.4 L735.8 846.6 L737.6 847.2 L739.5 848.4 L741.5 848.1 L743.0 847.9 L744.5 845.6 L746.1 845.3 L747.6 844.1 L749.1 842.0 L750.7 841.5 L752.2 840.3 L753.8 840.7 L755.3 840.9 L756.8 842.6 L758.4 842.9 L759.9 842.5 L761.4 842.3 L763.0 841.5 L764.8 842.0 L766.6 843.2 L768.4 843.8 L769.9 843.2 L771.4 841.3 L773.0 840.4 L774.5 840.9 L776.0 841.2 L778.0 839.8 L779.9 839.5 L781.4 839.0 L783.0 839.9 L785.3 837.9 L787.6 840.4 L789.1 839.2 L790.6 838.9 L792.2 840.0 L793.7 839.9 L795.2 841.0 L796.8 840.7 L798.3 840.8 L799.9 840.7 L801.4 841.8 L802.9 841.5 L804.5 841.7 L806.0 839.8 L807.5 840.6 L809.1 839.1 L810.6 839.5 L812.1 838.7 L813.7 840.0 L815.2 838.4 L816.8 839.2 L818.3 838.1 L819.8 838.8 L821.4 837.2 L822.9 836.0 L824.4 836.1 L826.2 835.6 L827.9 835.9 L829.6 836.9 L831.4 836.6 L833.7 839.5 L835.2 837.1 L836.7 836.1 L838.3 836.1 L839.8 834.5 L841.3 834.9 L842.9 833.3 L844.4 833.8 L845.9 832.4 L847.5 832.1 L849.0 832.3 L850.6 832.6 L852.1 833.0 L853.6 831.5 L855.2 831.5 L856.7 831.8 L858.2 830.8 L859.8 830.8 L861.3 831.8 L863.2 832.1 L865.2 830.7 L867.5 833.8 L869.0 832.3 L870.5 831.5 L872.3 832.2 L874.1 832.4 L875.9 833.0 L877.8 831.7 L879.8 831.0 L881.3 830.1 L882.8 831.4 L884.4 831.3 L885.9 831.2 L887.4 829.4 L889.0 830.0 L890.9 830.0 L892.8 831.0 L894.7 830.2 L896.7 828.9 L898.2 829.7 L899.7 828.7 L901.3 828.0 L902.8 827.4 L904.3 826.5 L905.9 825.3 L907.4 825.1 L908.9 825.8 L911.3 828.0 L913.2 827.5 L915.1 826.9 L917.0 824.6 L918.9 823.0 L920.5 822.1 L922.0 821.3 L923.5 821.5 L925.5 822.4 L927.4 824.1 L928.9 826.0 L930.5 826.1 L932.0 827.2 L933.9 826.9 L935.8 826.1 L938.1 829.2 L939.7 834.6 L940.5 834.9 L941.5 830.3 L943.8 831.9 L945.4 830.2 L946.9 828.0 L948.7 828.0 L950.5 826.3 L952.3 825.7 L954.6 826.8 L956.3 825.9 L958.1 825.4 L959.8 824.9 L961.5 824.6 L963.0 825.7 L964.6 826.3 L966.1 825.7 L967.7 826.5 L969.5 825.8 L971.2 825.7 L973.0 825.3 L974.8 824.5 L976.6 823.7 L978.4 822.6 L980.0 822.3 L981.5 822.0 L983.0 822.5 L984.6 823.1 L986.1 822.2 L987.6 822.9 L989.2 822.6 L991.5 824.6 L993.3 822.4 L995.1 821.0 L996.9 820.3 L998.4 819.8 L999.9 818.4 L1001.5 818.6 L1003.0 817.3 L1004.5 817.5 L1006.1 818.4 L1007.6 818.0 L1009.1 816.2 L1010.7 815.7 L1012.2 814.5 L1013.8 816.8 L1015.3 818.0 L1017.2 816.7 L1019.1 817.0 L1020.7 819.7 L1022.2 820.2 L1023.7 822.6 L1025.7 822.8 L1027.6 821.9 L1029.4 823.3 L1031.2 823.5 L1033.0 823.4 L1034.5 827.3 L1036.0 831.9 L1038.0 829.9 L1039.9 829.3 L1041.4 828.8 L1043.0 829.0 L1044.5 827.7 L1046.0 828.7 L1047.6 831.2 L1049.1 831.9 L1050.6 830.8 L1052.2 831.1 L1053.7 834.4 L1055.2 835.4 L1056.8 838.8 L1058.3 840.6 L1059.9 843.1 L1061.4 842.0 L1062.9 839.5 L1064.5 840.9 L1066.0 841.1 L1068.3 853.4 L1069.8 849.5 L1071.4 844.2 L1072.9 843.4 L1074.4 841.8 L1076.0 840.0 L1077.9 839.7 L1079.8 838.8 L1081.7 839.1 L1083.7 840.6 L1085.5 838.4 L1087.3 835.7 L1089.0 834.2 L1091.0 834.4 L1092.9 833.9 L1095.2 837.2 L1096.7 836.2 L1098.3 834.5 L1099.8 835.2 L1101.3 836.0 L1102.9 838.0 L1104.4 837.3 L1105.9 834.9 L1107.5 837.4 L1109.0 838.8 L1110.6 836.9 L1112.1 834.9 L1114.4 838.5 L1116.3 837.8 L1118.2 836.9 L1119.8 837.4 L1121.3 836.5 L1122.9 836.5 L1124.4 837.7 L1125.9 839.0 L1127.5 840.6 L1129.4 840.6 L1131.3 841.5 L1133.1 839.8 L1134.9 840.0 L1136.7 838.8 L1138.2 837.3 L1139.8 836.3 L1141.3 834.9 L1142.8 833.4 L1144.4 833.1 L1145.9 832.0 L1147.4 831.2 L1149.0 830.7 L1150.5 830.3 L1152.0 830.9 L1153.6 830.1 L1155.1 830.2 L1156.7 830.3 L1158.4 830.0 L1160.2 828.8 L1162.0 828.8 L1164.0 828.4 L1165.9 829.9 L1167.4 830.9 L1168.9 831.9 L1170.5 832.9 L1172.0 833.5 L1173.6 833.4 L1175.1 834.2 L1176.6 834.2 L1178.2 833.6 L1179.7 831.8 L1181.2 831.3 L1182.8 830.3 L1184.3 830.3 L1185.9 829.8 L1187.4 830.2 L1188.9 830.4 L1190.5 831.1 L1192.0 830.3 L1193.5 830.5 L1194.9 828.7 L1196.4 828.7 L1197.9 827.1 L1199.4 827.3 L1200.8 828.0 L1202.7 826.5 L1204.6 826.5 L1206.1 826.0 L1207.7 826.1 L1209.2 824.9 L1210.8 823.3 L1212.3 823.4 L1213.8 821.9 L1215.4 822.1 L1216.9 820.6 L1218.4 820.8 L1220.0 820.0 L1221.5 821.4 L1223.0 821.6 L1225.4 819.9 L1227.7 821.1 L1229.6 818.7 L1231.5 816.8 L1233.4 817.8 L1235.3 818.0 L1236.9 819.8 L1238.4 820.6 L1240.0 820.1 L1241.5 819.8 L1243.0 818.5 L1244.6 819.7 L1246.1 819.6 L1247.8 821.5 L1249.5 821.9 L1251.2 820.5 L1253.0 818.8 L1254.5 817.7 L1256.1 817.3 L1257.6 817.3 L1259.5 814.7 L1261.5 813.1 L1263.4 812.2 L1265.3 811.1 L1266.8 811.9 L1268.4 811.0 L1269.9 812.2 L1271.5 811.0 L1273.0 809.5 L1274.5 807.6 L1276.3 806.8 L1278.0 806.7 L1279.7 805.6 L1281.4 805.7 L1283.0 804.6 L1284.5 802.7 L1286.0 801.1 L1287.6 802.0 L1289.1 800.9 L1290.7 799.8 L1292.2 798.8 L1294.0 798.0 L1295.8 798.8 L1297.6 797.7 L1299.1 797.4 L1300.6 794.7 L1302.2 794.2 L1303.7 795.1 L1305.3 795.0 L1307.2 794.8 L1309.1 793.4 L1311.0 795.0 L1312.9 796.1 L1314.7 795.5 L1316.5 794.2 L1318.3 793.4 L1320.2 795.0 L1322.2 795.0 L1324.0 795.3 L1325.7 793.7 L1327.5 793.4 L1329.1 792.8 L1330.6 790.9 L1332.1 789.1 L1333.7 788.5 L1335.6 789.5 L1337.5 791.1 L1339.1 788.9 L1340.6 788.8 L1342.1 786.5 L1343.9 787.7 L1345.7 786.6 L1347.5 787.6 L1349.0 787.2 L1350.6 786.4 L1352.1 785.3 L1353.7 785.4 L1355.4 785.0 L1357.1 784.8 L1358.8 785.6 L1360.6 785.0 L1362.1 787.9 L1363.6 792.7 L1365.2 790.3 L1366.7 789.1 L1368.5 788.2 L1370.3 786.5 L1372.1 786.5 L1373.8 786.2 L1375.6 785.6 L1377.3 785.4 L1379.0 784.2 L1380.9 785.2 L1382.9 787.3 L1384.8 785.4 L1386.7 784.2 L1388.6 784.9 L1390.5 785.4 L1392.1 785.2 L1393.6 785.9 L1395.1 785.5 L1396.7 786.1 L1398.6 785.3 L1400.5 783.9 L1402.1 785.4 L1403.6 785.8 L1405.5 784.4 L1407.4 781.9 L1409.2 784.1 L1411.0 784.8 L1412.8 786.1 L1414.7 785.1 L1416.7 784.2 L1418.2 784.6 L1419.7 784.2 L1421.3 783.5 L1423.2 782.0 L1425.1 780.4 L1426.6 780.4 L1428.2 780.8 L1429.7 779.1 L1431.3 778.1 L1432.8 777.7 L1434.3 779.2 L1435.9 778.3 L1437.4 779.3 L1439.7 786.5 L1441.2 785.2 L1442.8 783.0 L1444.3 781.1 L1445.9 781.4 L1447.4 779.9 L1448.9 779.0 L1450.5 778.0 L1452.0 775.8 L1453.9 775.5 L1455.8 776.5 L1457.6 776.2 L1459.4 775.8 L1460.7 774.7 L1462.0 773.3 L1463.7 773.6 L1465.4 774.7 L1467.1 775.1 L1468.9 776.1 L1470.4 775.7 L1472.0 774.4 L1473.5 774.8 L1475.0 774.4 L1476.6 774.1 L1478.1 773.2 L1479.6 772.8 L1481.2 773.0 L1482.7 771.9 L1484.6 769.7 L1486.5 766.8 L1488.1 766.9 L1489.6 767.3 L1491.2 767.1 L1492.9 768.3 L1494.6 769.3 L1496.3 770.3 L1498.1 772.5 L1499.8 771.7 L1501.5 771.8 L1503.3 771.8 L1505.0 770.7 L1506.5 769.1 L1508.1 766.4 L1509.9 766.3 L1511.6 767.1 L1513.4 766.1 L1515.7 769.9 L1517.3 768.7 L1518.8 768.2 L1520.4 766.4 L1521.9 766.4 L1523.4 767.1 L1525.0 766.8 L1527.3 771.0 L1528.8 770.6 L1530.3 768.4 L1531.9 767.3 L1533.4 766.2 L1535.0 766.3 L1536.5 765.3 L1538.8 766.8 L1539.6 772.5 L1541.5 772.4 L1543.4 772.2 L1545.2 774.4 L1546.9 777.1 L1548.3 774.3 L1549.7 773.1 L1551.1 771.5 L1552.6 772.0 L1554.2 772.7 L1555.7 774.2 L1557.2 774.2 L1559.2 772.6 L1561.1 770.7 L1562.6 771.7 L1564.1 771.9 L1565.7 770.6 L1567.2 767.9 L1568.8 768.4 L1570.3 767.9 L1572.2 769.7 L1574.1 771.5 L1576.1 770.4 L1578.0 768.4 L1579.5 766.7 L1581.0 764.9 L1582.6 762.7 L1584.1 762.4 L1585.7 761.5 L1587.2 761.2 L1588.7 758.9 L1590.3 756.1 L1592.2 754.4 L1594.1 752.2 L1596.0 752.3 L1597.9 750.7 L1599.5 750.3 L1601.0 749.4 L1602.6 748.3 L1604.1 746.9 L1605.6 746.8 L1607.2 745.7 L1608.7 744.9 L1611.0 741.8 L1612.5 741.7 L1614.1 741.7 L1615.6 742.3 L1617.4 742.3 L1619.2 742.2 L1621.0 741.2 L1622.5 742.1 L1624.1 742.2 L1625.6 744.3 L1627.1 744.6 L1628.7 743.6 L1630.2 742.6 L1631.8 740.9 L1633.3 740.7 L1634.8 741.5 L1636.4 742.3 L1637.9 742.2 L1639.4 741.1 L1641.0 740.7 L1642.5 739.2 L1644.0 738.5 L1645.6 736.1 L1647.1 735.6 L1648.7 735.4 L1650.2 735.9 L1651.7 735.2 L1653.3 734.6 L1654.7 733.9 L1656.1 733.9 L1657.6 733.0 L1659.3 736.8 L1660.9 740.3 L1662.5 739.4 L1664.0 739.6 L1665.6 738.5 L1667.1 738.4 L1668.6 739.9 L1670.2 740.0 L1672.1 737.6 L1674.0 736.1" fill="none" stroke="#0aa3a8" stroke-width="2" stroke-linejoin="round"/>
<path d="M156 676.5 H1674.5 V951.0" fill="none" stroke="#999" stroke-width="1.6"/>
<path d="M156 950.5 H1674.5" fill="none" stroke="#aaa" stroke-width="1.4"/>
<line x1="162.5" x2="162.5" y1="676.5" y2="950.5" stroke="#aaa" stroke-width="1.2"/>
<line x1="156" x2="162.5" y1="730.7" y2="730.7" stroke="#aaa" stroke-width="1.2"/>
<line x1="156" x2="162.5" y1="785.6" y2="785.6" stroke="#aaa" stroke-width="1.2"/>
<line x1="156" x2="162.5" y1="840.5" y2="840.5" stroke="#aaa" stroke-width="1.2"/>
<line x1="368.5" x2="368.5" y1="950.5" y2="956.0" stroke="#999" stroke-width="1.4"/>
<line x1="671.0" x2="671.0" y1="950.5" y2="956.0" stroke="#999" stroke-width="1.4"/>
<line x1="974.7" x2="974.7" y1="950.5" y2="956.0" stroke="#999" stroke-width="1.4"/>
<line x1="1273.7" x2="1273.7" y1="950.5" y2="956.0" stroke="#999" stroke-width="1.4"/>
<line x1="1575.2" x2="1575.2" y1="950.5" y2="956.0" stroke="#999" stroke-width="1.4"/>
<line x1="162.5" x2="162.5" y1="676.5" y2="950.5" stroke="#4a5070" stroke-width="1" stroke-dasharray="3 2"/>
<line x1="162.5" x2="1637" y1="710.3" y2="710.3" stroke="#737892" stroke-width="1" stroke-dasharray="3 2.1"/>
<text x="150" y="691.8" text-anchor="end" font-size="20" fill="#484848">400</text>
<text x="150" y="739.6" text-anchor="end" font-size="20" fill="#484848">300</text>
<text x="150" y="795.2" text-anchor="end" font-size="20" fill="#484848">200</text>
<text x="150" y="850" text-anchor="end" font-size="20" fill="#484848">100</text>
<text x="151.6" y="904.4" text-anchor="end" font-size="20" fill="#484848">0</text>
<text x="149" y="955.2" text-anchor="end" font-size="20" fill="#484848">-100</text>
<text x="153.1" y="977.9" font-size="20" fill="#484848">2009/09</text>
<text x="361.5" y="977.9" font-size="20" fill="#484848">2011</text>
<text x="664.0" y="977.9" font-size="20" fill="#484848">2013</text>
<text x="967.7" y="977.9" font-size="20" fill="#484848">2015</text>
<text x="1266.7" y="977.9" font-size="20" fill="#484848">2017</text>
<text x="1568.2" y="977.9" font-size="20" fill="#484848">2019</text>
<text x="164" y="700" font-size="19.6" fill="#888">2009/09/04</text>
<text x="277.5" y="699.6" font-size="19.5" fill="#14a5aa" font-family="'Liberation Sans','Noto Serif CJK SC',serif" font-weight="300">總報酬率</text>
<text x="355.0" y="699.6" font-size="19.8" fill="#14a5aa" font-family="'Liberation Sans','Noto Serif CJK SC',serif">:</text>
<text x="362.9" y="699.6" font-size="19.8" fill="#14a5aa" font-family="'Liberation Sans','Noto Serif CJK SC',serif">0</text>
<text x="377.5" y="699.6" font-size="19.8" fill="#14a5aa" font-family="'Liberation Sans','Noto Serif CJK SC',serif">%</text>
<text x="403.0" y="699.6" font-size="19.5" fill="#8d50a5" font-family="'Liberation Sans','Noto Serif CJK SC',serif" font-weight="300">加權指數</text>
<text x="480.0" y="699.6" font-size="19.7" fill="#8d50a5" font-family="'Liberation Sans','Noto Serif CJK SC',serif">(TSE.TW)</text>
<text x="567.5" y="699.6" font-size="19.5" fill="#8d50a5" font-family="'Liberation Sans','Noto Serif CJK SC',serif" font-weight="300">報酬率</text>
<text x="625.6" y="699.6" font-size="19.8" fill="#8d50a5" font-family="'Liberation Sans','Noto Serif CJK SC',serif">:</text>
<text x="633.6" y="699.6" font-size="19.8" fill="#8d50a5" font-family="'Liberation Sans','Noto Serif CJK SC',serif">0</text>
<text x="647.8" y="699.6" font-size="19.8" fill="#8d50a5" font-family="'Liberation Sans','Noto Serif CJK SC',serif">%</text>
<circle cx="674.9" cy="691" r="9.8" fill="#2b86f5"/>
<path d="M671.3 687.4 L678.5 694.6 M678.5 687.4 L671.3 694.6" stroke="#fff" stroke-width="4.3" fill="none"/>
<rect x="1623.8" y="711.3" width="62.5" height="17.2" rx="3" fill="#e8e8e8" stroke="#c4c4c4" stroke-width="1.2"/>
<text x="1625.5" y="728.8" font-size="20.6" fill="#222" textLength="59.5" lengthAdjust="spacingAndGlyphs">339.33</text>
<rect x="1637.4" y="679.9" width="33.5" height="32.6" rx="4.5" fill="#fff" stroke="#cfcfcf" stroke-width="2"/>
<path d="M1645 696.6 H1661.3 M1653.3 688 V704.8" stroke="#333" stroke-width="4.4" fill="none"/>
<rect x="163" y="952.6" width="100.5" height="18.5" rx="4" fill="#e8e8e8" stroke="#bdbdbd" stroke-width="1.4"/>
<text x="164.6" y="971" font-size="19.4" fill="#222">2009/09/04</text>
<circle cx="127.3" cy="1004.2" r="20.6" fill="#eee" stroke="#999" stroke-width="1.8"/>
<circle cx="1669.6" cy="1003.6" r="20.6" fill="#eee" stroke="#999" stroke-width="1.8"/>
</svg>

</body>
</html>
